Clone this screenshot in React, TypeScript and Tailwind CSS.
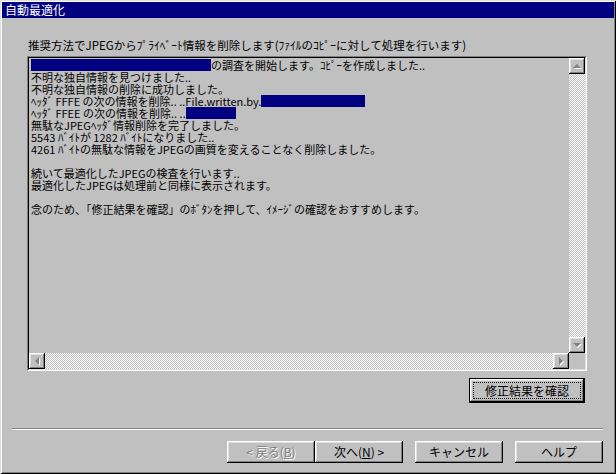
import type { ReactNode } from "react";

const FONT = "font-['Noto_Sans_CJK_JP','MS_UI_Gothic',sans-serif]";
const RAISED =
    "shadow-[inset_-1px_-1px_#000000,inset_1px_1px_#ffffff,inset_-2px_-2px_#808080,inset_2px_2px_#dfdfdf]";
const TRACK = "bg-[repeating-conic-gradient(#ffffff_0_25%,#c0c0c0_0_50%)] bg-[length:2px_2px]";

const Blot = ({ w }: { w: number }) => (
    <span className="inline-block h-[12px] bg-[#000080] align-top" style={{ width: w }} />
);

const lines: ReactNode[] = [
    <>
        <Blot w={180} />
        の調査を開始します。ｺﾋﾟｰを作成しました..
    </>,
    "不明な独自情報を見つけました..",
    "不明な独自情報の削除に成功しました。",
    <>
        ﾍｯﾀﾞ FFFE の次の情報を削除.. ..File.written.by.
        <Blot w={104} />
    </>,
    <>
        ﾍｯﾀﾞ FFEE の次の情報を削除.. ..
        <Blot w={50} />
    </>,
    "無駄なJPEGﾍｯﾀﾞ情報削除を完了しました。",
    "5543 ﾊﾞｲﾄが 1282 ﾊﾞｲﾄになりました..",
    "4261 ﾊﾞｲﾄの無駄な情報をJPEGの画質を変えることなく削除しました。",
    "",
    "続いて最適化したJPEGの検査を行います..",
    "最適化したJPEGは処理前と同様に表示されます。",
    "",
    "念のため、「修正結果を確認」のﾎﾞﾀﾝを押して、ｲﾒｰｼﾞの確認をおすすめします。",
];

// disabled-looking scroll arrow, drawn grey with a white drop
const Arrow = ({ dir }: { dir: "up" | "down" | "left" | "right" }) => {
    const pts = {
        up: "8,6 4,10 12,10",
        down: "4,6 12,6 8,10",
        left: "6,8 10,4 10,12",
        right: "6,4 10,8 6,12",
    }[dir];
    return (
        <div className={`h-[16px] w-[16px] shrink-0 bg-[#c0c0c0] ${RAISED}`}>
            <svg width="16" height="16" viewBox="0 0 16 16">
                <polygon points={pts} fill="#ffffff" transform="translate(1 1)" />
                <polygon points={pts} fill="#808080" />
            </svg>
        </div>
    );
};

const Btn = ({ children, disabled }: { children: ReactNode; disabled?: boolean }) => (
    <div
        className={`flex h-[22px] w-[88px] items-center justify-center bg-[#c0c0c0] text-[12px] leading-[12px] ${RAISED} ${
            disabled ? "text-[#808080] [text-shadow:1px_1px_#ffffff]" : "text-black"
        }`}
    >
        {children}
    </div>
);

export default function App() {
    return (
        <div
            className={`flex h-[474px] w-[616px] flex-col bg-[#c0c0c0] p-[2px] ${FONT} shadow-[inset_1px_1px_#dfdfdf,inset_-1px_-1px_#000000,inset_2px_2px_#ffffff,inset_-2px_-2px_#808080]`}
        >
            <div className="flex h-[16px] items-center bg-[#000080] pl-[3px] text-[12px] leading-[12px] text-white">
                自動最適化
            </div>

            <div className="flex flex-col pl-[25px] pr-[27px]">
                <p className="mt-[21px] h-[12px] pl-[1px] text-[11.5px] leading-[12px] whitespace-nowrap text-black">
                    推奨方法でJPEGからﾌﾟﾗｲﾍﾞｰﾄ情報を削除します(ﾌｧｲﾙのｺﾋﾟｰに対して処理を行います)
                </p>

                <div className="mt-[5px] flex h-[315px] border border-t-[#808080] border-l-[#808080] border-b-white border-r-white">
                    <div className="flex flex-1 flex-col border border-t-black border-l-black border-b-[#dfdfdf] border-r-[#dfdfdf]">
                        <div className="flex min-h-0 flex-1">
                            <div className="flex-1 overflow-hidden pt-[1px] pl-[2px] text-[11px] leading-[12px] text-black">
                                {lines.map((l, i) => (
                                    <div key={i} className="h-[12px] whitespace-nowrap">
                                        {l}
                                    </div>
                                ))}
                            </div>
                            <div className="flex w-[16px] flex-col">
                                <Arrow dir="up" />
                                <div className={`flex-1 ${TRACK}`} />
                                <Arrow dir="down" />
                            </div>
                        </div>
                        <div className="flex h-[16px]">
                            <Arrow dir="left" />
                            <div className={`flex-1 ${TRACK}`} />
                            <Arrow dir="right" />
                            <div className="w-[16px] bg-[#c0c0c0]" />
                        </div>
                    </div>
                </div>

                <div className="mt-[7px] flex justify-end pr-[2px]">
                    <div className="flex h-[25px] w-[116px] border border-black bg-[#c0c0c0]">
                        <div className={`flex flex-1 p-[3px] ${RAISED}`}>
                            <div className="flex flex-1 items-center justify-center border border-dotted border-black text-[12px] leading-[12px] text-black">
                                修正結果を確認
                            </div>
                        </div>
                    </div>
                </div>
            </div>

            <div className="mt-[25px] flex flex-col pl-[10px] pr-[11px]">
                <div className="h-[1px] bg-[#808080]" />
                <div className="h-[1px] bg-white" />
                <div className="mt-[11px] flex justify-end">
                    <Btn disabled>
                        &lt; 戻る(<span className="underline">B</span>)
                    </Btn>
                    <Btn>
                        次へ(<span className="underline">N</span>) &gt;
                    </Btn>
                    <div className="w-[12px]" />
                    <Btn>キャンセル</Btn>
                    <div className="w-[12px]" />
                    <Btn>ヘルプ</Btn>
                </div>
            </div>
        </div>
    );
}
